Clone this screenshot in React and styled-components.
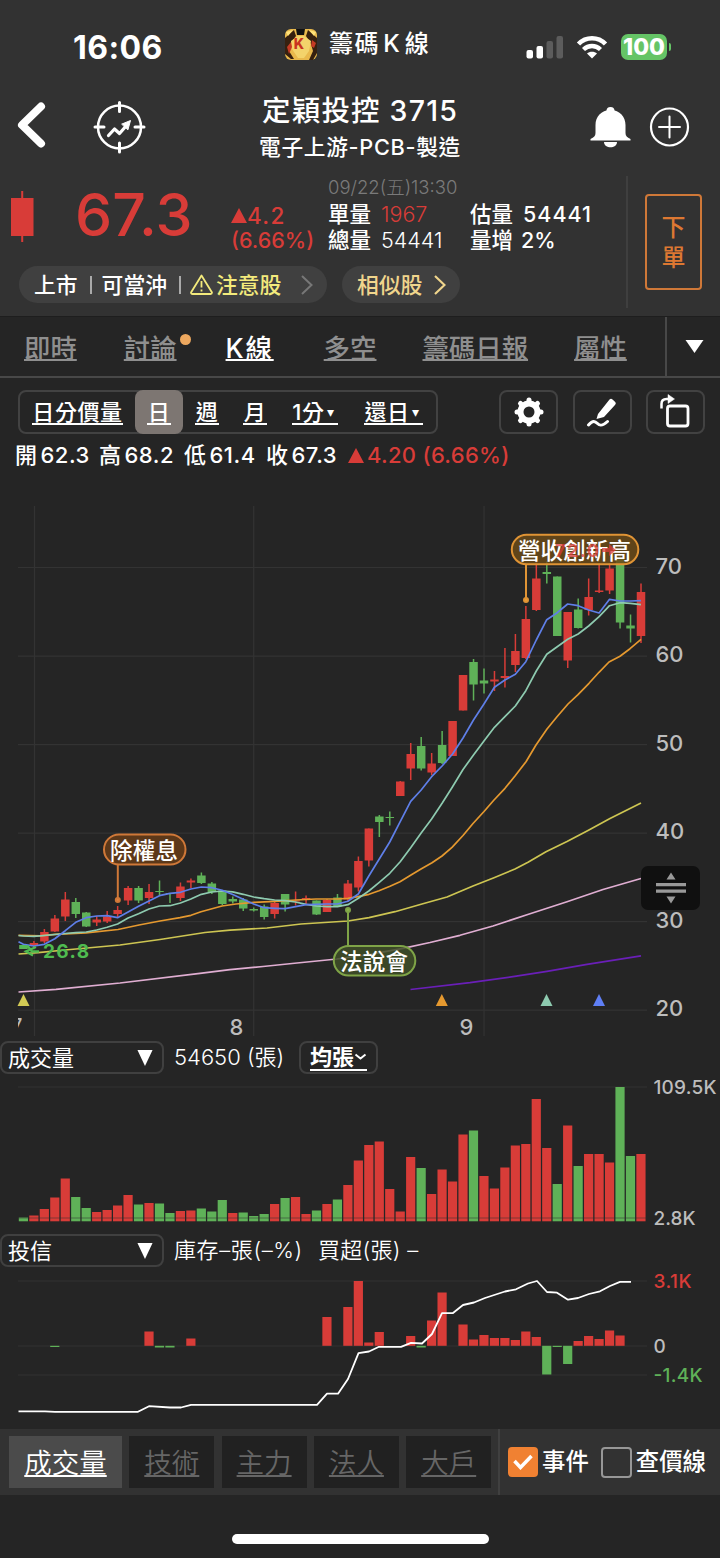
import React, { useState } from "react";
import styled, { createGlobalStyle } from "styled-components";

const RED = "#d83c38";
const GREEN = "#5fb158";

const GlobalStyle = createGlobalStyle`
  * {
    box-sizing: border-box;
  }
  body {
    margin: 0;
    background-color: #252525;
  }
  button {
    padding: 0;
    border: none;
    background: none;
    color: inherit;
    font: inherit;
    letter-spacing: inherit;
  }
`;

const Screen = styled.div`
  width: 720px;
  height: 1558px;
  display: flex;
  flex-direction: column;
  overflow: hidden;
  background-color: #252525;
  color: #fff;
  font-family: Inter, "Noto Sans CJK TC", sans-serif;
  font-weight: 500;
  white-space: nowrap;

  svg {
    display: block;
    flex: none;
  }
`;

/* header */

const Header = styled.header`
  height: 316px;
  flex: none;
  background-color: #323232;
`;

const StatusBar = styled.div`
  height: 90px;
  display: flex;
  align-items: flex-start;
`;

const Clock = styled.div`
  width: 212px;
  margin: 28px 0 0 73px;
  font-size: 32px;
  line-height: 40px;
  font-weight: 700;
  letter-spacing: 0.4px;
`;

const AppName = styled.div`
  width: 241px;
  margin-top: 27px;
  display: flex;
  align-items: center;
  font-size: 24px;
  line-height: 34px;
  letter-spacing: 1.4px;

  svg {
    margin-right: 12px;
  }
  span {
    width: 25px;
    text-align: center;
  }
`;

const StatusIcons = styled.div`
  margin-top: 34px;
  display: flex;
  align-items: center;
  gap: 13px;
`;

const Battery = styled.div`
  width: 46px;
  height: 26px;
  border-radius: 7px;
  background-color: #65c466;
  font-size: 23px;
  font-weight: 800;
  line-height: 26px;
  text-align: center;
`;

const BatteryWrap = styled.div`
  display: flex;
  align-items: center;
  gap: 2px;
`;

const BatteryTip = styled.div`
  width: 2px;
  height: 8px;
  border-radius: 0 2px 2px 0;
  background-color: #65c466;
`;

const NavBar = styled.div`
  height: 82px;
  display: flex;
  align-items: flex-start;
  padding-left: 17px;
`;

const NavIcon = styled.button`
  margin: ${(props) => props.$margin};
`;

const TitleBlock = styled.div`
  width: 260px;
  margin: 2px 0 0 84px;
  text-align: center;
`;

const Title = styled.h1`
  margin: 0;
  font-size: 28.5px;
  line-height: 38px;
  font-weight: 500;
  letter-spacing: 1.2px;
`;

const SubTitle = styled.div`
  font-size: 21.7px;
  line-height: 34px;
  letter-spacing: 0.7px;
`;

const Quote = styled.div`
  display: flex;
  height: 144px;
`;

const QuoteMain = styled.div`
  width: 628px;
  height: 132px;
  margin-top: 4px;
  border-right: 2px solid #3f3f3f;
`;

const PriceRow = styled.div`
  height: 84px;
  display: flex;
  align-items: flex-start;
`;

const Price = styled.div`
  width: 155px;
  margin: 7px 0 0 41px;
  color: ${RED};
  font-size: 59px;
  line-height: 64px;
  font-weight: 550;
  letter-spacing: 0.2px;
`;

const Change = styled.div`
  width: 97px;
  margin: 27px 0 0 1px;
  color: ${RED};
  font-size: 21.5px;
  line-height: 25px;
`;

const ChangeLine = styled.div`
  display: flex;
  align-items: center;
  font-size: 22.5px;
  letter-spacing: 1.3px;
`;

const Volumes = styled.div`
  display: grid;
  grid-template-columns: 142px auto;
  font-size: 21.5px;
  line-height: 26px;
`;

const QuoteTime = styled.div`
  grid-column: 1 / 3;
  height: 25px;
  line-height: 22px;
  font-size: 18.5px;
  font-weight: 300;
  color: #7a7a7a;
`;

const Figure = styled.div`
  display: flex;
  align-items: center;
  gap: ${(props) => props.$gap || 10}px;

  b {
    font-weight: ${(props) => (props.$light ? 300 : 500)};
    letter-spacing: ${(props) => props.$spacing || 0}px;
    color: ${(props) => props.$color || "#fff"};
  }
`;

const PillRow = styled.div`
  display: flex;
  gap: 15px;
  margin: 6px 0 0 19px;
`;

const Pill = styled.button`
  width: ${(props) => props.$width}px;
  height: 37px;
  padding-left: 15px;
  display: flex;
  align-items: center;
  border-radius: 19px;
  background-color: #404040;
  color: ${(props) => props.$color || "#fff"};
  font-size: 21.8px;
  line-height: 34px;

  i {
    width: 2px;
    height: 18px;
    background-color: #aaa;
  }
`;

const OrderButton = styled.button`
  width: 57px;
  height: 96px;
  margin: 22px 0 0 17px;
  padding-top: 2px;
  border: 2px solid #cf7838;
  border-radius: 4px;
  color: #dd7832;
  font-size: 24px;
  line-height: 30px;
  display: flex;
  flex-direction: column;
  align-items: center;
  justify-content: center;
`;

/* page tabs */

const Tabs = styled.nav`
  height: 62px;
  flex: none;
  display: flex;
  border-top: 1px solid #1e1e1e;
  border-bottom: 2px solid #484848;
`;

const TabList = styled.div`
  width: 667px;
  display: flex;
  align-items: center;
  border-right: 2px solid #484848;
`;

const Tab = styled.button`
  position: relative;
  margin-left: ${(props) => props.$gap}px;
  padding-top: 3px;
  color: ${(props) => (props.$active ? "#fff" : "#8f8f8f")};
  font-size: 26.4px;
  line-height: 36px;
  letter-spacing: ${(props) => (props.$active ? "1.8px" : 0)};
  text-decoration: underline;
  text-decoration-skip-ink: none;
  text-decoration-thickness: 2px;
  text-underline-offset: 1px;
`;

const Dot = styled.span`
  position: absolute;
  left: 56px;
  top: 7px;
  width: 11px;
  height: 11px;
  border-radius: 50%;
  background-color: #eda85f;
`;

const More = styled.button`
  flex: 1;
  display: flex;
  align-items: center;
  justify-content: center;
  padding-left: 1px;
`;

/* chart toolbar */

const Toolbar = styled.div`
  height: 56px;
  flex: none;
  display: flex;
  align-items: flex-end;
  padding-left: 18px;
`;

const Periods = styled.div`
  width: 420px;
  height: 44px;
  margin-right: 61px;
  display: flex;
  align-items: center;
  border: 2px solid #424242;
  border-radius: 8px;
`;

const Period = styled.button`
  width: ${(props) => props.$width}px;
  height: 44px;
  display: flex;
  align-items: center;
  justify-content: center;
  border-radius: 8px;
  background-color: ${(props) => (props.$active ? "#7d7672" : "transparent")};

  span {
    display: flex;
    align-items: center;
    justify-content: center;
    min-width: 24px;
    height: 25px;
    margin-top: 1px;
    border-bottom: 2px solid #fff;
    font-size: 22px;
    line-height: 24px;
    letter-spacing: 0.6px;
  }
  small {
    width: 13px;
    font-size: 14px;
    text-align: center;
  }
`;

const ToolButton = styled.button`
  width: 59px;
  height: 44px;
  margin-right: 14.5px;
  display: flex;
  align-items: center;
  justify-content: center;
  border: 2px solid #424242;
  border-radius: 8px;
`;

const Ohlc = styled.div`
  height: 44px;
  flex: none;
  padding: 0 0 2px 15px;
  display: flex;
  align-items: center;
  font-size: 22px;
  line-height: 30px;
  letter-spacing: 0.5px;
`;

const OhlcItem = styled.div`
  width: ${(props) => props.$width}px;
  display: flex;
  gap: 3px;
  align-items: center;
  color: ${(props) => props.$color || "#fff"};
  letter-spacing: ${(props) => (props.$color ? "0.3px" : "inherit")};
`;

/* charts */

const ChartArea = styled.div`
  position: relative;
  height: ${(props) => props.$height}px;
  flex: none;
`;

const SplitHandle = styled.button`
  position: absolute;
  left: 641px;
  top: 388px;
  width: 59px;
  height: 44px;
  border-radius: 7px;
  background-color: #101010;
  display: flex;
  align-items: center;
  justify-content: center;
`;

const PaneHead = styled.div`
  height: 34px;
  flex: none;
  display: flex;
  align-items: flex-start;
  font-size: 22px;
  line-height: 32px;
  font-weight: 400;
`;

const Select = styled.button`
  width: 164px;
  height: 33px;
  padding: 0 9px 0 6px;
  margin-right: 10px;
  display: flex;
  align-items: center;
  justify-content: space-between;
  border: 2px solid #404040;
  border-radius: 8px;
`;

const PaneText = styled.div`
  width: ${(props) => props.$width}px;
  letter-spacing: ${(props) => props.$spacing || 0}px;
  font-weight: 350;
`;

const AvgButton = styled.button`
  width: 79px;
  height: 33px;
  display: flex;
  align-items: center;
  justify-content: center;
  border: 2px solid #404040;
  border-radius: 8px;
  font-weight: 600;

  span {
    display: flex;
    align-items: center;
    height: 26px;
    border-bottom: 2px solid #fff;
  }
`;

const AxisText = styled.text`
  font-size: ${(props) => props.$size || 22}px;
  font-weight: ${(props) => props.$weight || 550};
  fill: ${(props) => props.$color || "#bdbdbd"};
`;

const EventText = styled.text`
  font-size: 22.5px;
  font-weight: 500;
  fill: #fff;
`;

/* bottom */

const BottomBar = styled.div`
  height: 66px;
  flex: none;
  display: flex;
  align-items: center;
  padding-left: 9px;
  background-color: #323232;
`;

const PaneTabs = styled.div`
  width: 491px;
  height: 66px;
  display: flex;
  align-items: center;
  gap: 7.3px;
  border-right: 2px solid #404040;
`;

const PaneTab = styled.button`
  width: ${(props) => (props.$active ? 113 : 85)}px;
  height: 52px;
  padding-top: 2px;
  background-color: ${(props) => (props.$active ? "#4b4b4b" : "#212121")};
  color: ${(props) => (props.$active ? "#fff" : "#666")};
  font-size: 27.5px;
  line-height: 40px;
  font-weight: 350;
  text-decoration: underline;
  text-decoration-skip-ink: none;
  text-decoration-thickness: 2px;
  text-underline-offset: 2px;
`;

const Check = styled.button`
  display: flex;
  align-items: center;
  gap: 4px;
  margin-left: ${(props) => props.$gap}px;
  font-size: 23.4px;
  line-height: 34px;
`;

const Box = styled.span`
  width: ${(props) => (props.$on ? 30 : 31)}px;
  height: ${(props) => (props.$on ? 30 : 31)}px;
  border-radius: 4px;
  border: ${(props) => (props.$on ? "none" : "2px solid #979797")};
  background-color: ${(props) => (props.$on ? "#f08132" : "transparent")};
  display: flex;
  align-items: center;
  justify-content: center;
`;

const HomeArea = styled.div`
  flex: 1;
  display: flex;
  justify-content: center;
  padding-top: 39px;
`;

const HomeBar = styled.div`
  width: 257px;
  height: 10px;
  border-radius: 5px;
  background-color: #fff;
`;

// [color, high, body top, body bottom, low]
const candles = [
  ["g", 945, 945, 949, 949],
  ["r", 941, 943, 946, 947],
  ["r", 929, 932, 941.5, 943],
  ["r", 915, 918.5, 931.5, 932],
  ["r", 892, 899.5, 916.5, 921],
  ["g", 898, 902, 914, 918],
  ["g", 912, 912.5, 926.5, 927],
  ["r", 916, 919.5, 922.5, 926],
  ["r", 911, 916.5, 921.5, 923],
  ["r", 906, 910, 914, 917],
  ["r", 886, 888, 900.5, 905],
  ["g", 886, 888, 900.5, 903],
  ["r", 884, 892, 898, 904],
  ["g", 880.5, 891, 892, 895.5],
  ["g", 893, 893, 894, 903],
  ["r", 882.5, 886.5, 898, 901],
  ["r", 878.5, 880.5, 882.5, 888],
  ["g", 872.5, 875.5, 883, 884],
  ["g", 882, 883.5, 892, 894],
  ["g", 890, 890.5, 904, 905],
  ["g", 896.5, 899, 901.5, 903.5],
  ["g", 898, 899.5, 908.5, 911],
  ["g", 907.5, 909, 910.5, 911.5],
  ["g", 904.5, 906.5, 917, 919.5],
  ["r", 901, 903, 914, 918.5],
  ["g", 894, 894, 904.5, 911.5],
  ["r", 891.5, 900.5, 901.5, 905.5],
  ["r", 895.5, 898, 900, 904],
  ["g", 900.5, 900.5, 914.5, 915],
  ["r", 899, 900, 912, 912],
  ["g", 894, 897.5, 906.5, 907],
  ["r", 880, 883.5, 899.5, 901.5],
  ["r", 856.5, 861, 887.5, 891.5],
  ["r", 828.5, 828.5, 860.5, 866.5],
  ["g", 815, 816.5, 822, 837],
  ["g", 811.5, 817, 818, 825.5],
  ["r", 781, 781.5, 796, 796],
  ["r", 743, 754, 768.5, 780],
  ["g", 737, 746, 768.5, 770.5],
  ["r", 753, 763.5, 772.5, 775],
  ["g", 731, 745, 763, 764],
  ["r", 721, 721, 756, 756],
  ["r", 675, 675, 710.5, 710.5],
  ["g", 659, 662, 684.5, 700.5],
  ["g", 668.5, 680.5, 683.5, 693.5],
  ["r", 671, 679.5, 681.5, 691],
  ["r", 648, 676, 678, 687.5],
  ["r", 634, 651, 665, 672],
  ["r", 606, 619, 658, 659],
  ["r", 560, 578.5, 610, 611],
  ["g", 561, 572, 574, 583.5],
  ["g", 576.5, 576.5, 636, 636],
  ["r", 612, 612, 660.5, 668],
  ["g", 598.5, 609.5, 628, 628.5],
  ["r", 578.5, 597, 610, 615.5],
  ["r", 563, 590.5, 592, 593],
  ["r", 563, 568.5, 590.5, 594],
  ["g", 555, 557, 622.5, 628.5],
  ["g", 614.5, 625.5, 628.5, 642.5],
  ["r", 583.5, 592, 636, 643],
];

const volumeColors =
  "grrrrggrrrrgrggrrgggrgggrgrrgrgrrrrrrrgrrrrgrrrrrrrgrgrrrggr";

const volumeTops = [
  1217.5, 1215.5, 1209, 1197.5, 1178.5, 1197, 1208, 1212, 1210, 1205.5, 1195,
  1204.5, 1203, 1203.5, 1213, 1211, 1210.5, 1208.5, 1211.5, 1200, 1213, 1212.5,
  1216, 1214, 1204, 1198, 1197, 1214, 1210.5, 1204, 1199.5, 1185, 1160.5, 1145,
  1141.5, 1189, 1211.5, 1157, 1168, 1194, 1169.5, 1181.5, 1134.5, 1130.5, 1176,
  1188.5, 1167.5, 1145.5, 1144, 1099, 1148, 1184, 1125.5, 1166, 1154, 1154,
  1162.5, 1087, 1156, 1154,
];

// candle index -> bar end, above or below the zero line at 1346
const trustBars = [
  [3, 1347], [12, 1331.5], [13, 1347.5], [14, 1347.5], [16, 1338.5],
  [29, 1317], [31, 1307], [32, 1281], [33, 1342.5], [34, 1332], [37, 1336],
  [38, 1347.5], [39, 1320.5], [40, 1292.5], [42, 1324.5], [43, 1339.5],
  [44, 1335], [45, 1338], [46, 1338], [47, 1340], [48, 1331.5], [49, 1337],
  [50, 1374.5], [51, 1347], [52, 1364], [53, 1341], [54, 1336], [55, 1339],
  [56, 1330.5], [57, 1335.5],
];

const trustLine =
  "18.5,1411.3 45,1411.3 55,1411.8 138,1411.8 149,1406.2 170,1407.5 181,1407.5 191,1404.8 317,1404.8 327,1393.7 338,1393.7 348,1379 358.5,1353.2 369,1351.5 379,1346.8 401,1346.8 411,1342.8 422,1343.5 432,1334 442,1313.2 453,1313 463,1305 474,1302.5 485,1298 505,1291.5 516,1289.3 528,1283.5 537,1281 547,1292 557,1292.7 568,1299.7 578,1298 589,1294 600,1291.3 610,1286 620,1281.8 631,1281.8";

// moving averages: first x is given, the rest follow the candles
const ma5 = [
  944.3, 946, 944.3, 938.7, 930.7, 922.3, 917.7, 916, 915.7, 917.7, 912, 906.3,
  901, 895.7, 893.3, 892.3, 889, 887, 887.7, 890.3, 894.5, 899.3, 904, 907.7,
  908.3, 908.7, 906.7, 904.7, 904.3, 904, 904, 901.3, 894, 876, 859, 842, 821.7,
  801.3, 790, 776.7, 766, 754, 738, 720, 704, 687.3, 680, 674.3, 661.7, 640,
  619.7, 612.7, 604, 605.7, 610, 613, 599.3, 601, 601, 600.7,
];

const ma10 = [
  936, 936.3, 935.5, 934.5, 933.5, 932.7, 932, 930, 927.3, 924, 918, 913.7, 909,
  906, 905.7, 903, 899, 894.3, 892, 891, 891.9, 894.3, 897, 898.7, 900, 900.7,
  902, 904.3, 906, 906.7, 906.7, 904.7, 898.3, 891, 882.3, 873.3, 861.7, 847.7,
  833, 819, 803.3, 786.7, 769.5, 755, 741, 727.3, 716.7, 706, 690.7, 671, 654.3,
  646.7, 639.3, 634, 626, 616.7, 605.7, 602.7, 603.3, 604.7,
];

const x = (i) => 23.4 + i * 10.467;
const follow = (start, ys) =>
  `18.5,${start} ` + ys.map((y, i) => `${x(i)},${y}`).join(" ");

const lines = [
  { color: "#6a1fb8", points: "410.5,989.5 470,982.7 513,976.7 547,971.3 587,964.3 641,955.8" },
  {
    color: "#e0aed2",
    points:
      "18.5,992 56,989.3 120,983 200,973.3 230,969.7 263,966.5 297,963 337,959 370,954.3 403,948.3 430,942.5 460,935.3 493,926 527,914.7 567,901.7 603,889.5 641,878.5",
  },
  {
    color: "#cdc552",
    points:
      "18.5,954 38,952.7 65,950 120,945 160,939.5 205,932.5 230,930.2 267,928 301,924 348,921 369,917.7 395,911.7 422,904 447,897 473,886 494,877.7 515,869 528,862.3 546,851.7 567,841.5 588,830.5 610,818.5 641,803",
  },
  {
    color: "#e5992f",
    points:
      "18.5,935.3 40,935.8 55,934.3 86,932.8 118,929.5 139,925 160,921 180,917.7 191,915.3 201,911.7 212,908.8 222,906 236,904 254,902.3 275,901.3 296,900 316,899 337,899 348,898.3 358,896.7 369,894.3 379,890.7 390,886.3 400,881.7 411,875 421,869 432,862.7 442,856 452,847.3 463,835.5 473,823.5 484,811.5 494,800 505,788.3 515,776 526,761.7 536,745 547,729 557,716.7 568,704 578,694.7 589,683.3 599,672.3 609,662 620,656.3 630,648.7 641,639.3",
  },
  { color: "#8ecbb0", points: follow(935.5, ma10) },
  { color: "#5f7fe8", points: follow(941.7, ma5) },
];

const fill = (c) => (c === "r" ? RED : GREEN);

function DownTriangle({ w = 18, h = 12 }) {
  return (
    <svg width={w} height={h} viewBox="0 0 18 12" preserveAspectRatio="none">
      <path d="M0.5 0h17L9 12z" fill="#fff" />
    </svg>
  );
}

function UpTriangle() {
  return (
    <svg width="16" height="15" viewBox="0 0 16 15">
      <path d="M8 0l8 15H0z" fill={RED} />
    </svg>
  );
}

function AppLogo() {
  return (
    <svg width="32" height="31" viewBox="0 0 32 31">
      <rect width="32" height="31" rx="6" fill="#e9b94c" />
      <path d="M0 9l9-8 2 6-6 8-1 7 5 8H6L0 25z" fill="#36200f" />
      <path d="M32 9l-9-8-2 6 5 8 2 7-4 9h4l4-7z" fill="#36200f" />
      <path d="M6 12l7-5h6l7 5-2 10-5 7h-6l-6-9z" fill="#f3d36b" />
      <path d="M11 0h9l-1 6h-7z" fill="#111" />
      <path d="M2 18l4-5 1 5-3 7zM27 11l4 3-2 5-3-2z" fill="#c43a24" />
      <path d="M1 3l7-2-5 6zM24 1l7 2-2 4z" fill="#ffe27a" />
      <text
        x="14"
        y="19.5"
        textAnchor="middle"
        fontSize="14"
        fontWeight="800"
        letterSpacing="0"
        fill="#c9341f"
      >
        K
      </text>
    </svg>
  );
}

function Signal() {
  return (
    <svg width="37" height="24" viewBox="0 0 37 24">
      <rect x="0.5" y="15" width="6.5" height="8.5" rx="2" fill="#fff" />
      <rect x="10.5" y="11" width="6.5" height="12.5" rx="2" fill="#fff" />
      <rect x="20.5" y="6" width="6.5" height="17.5" rx="2" fill="#5c5c5c" />
      <rect x="30.5" y="1" width="6.5" height="22.5" rx="2" fill="#5c5c5c" />
    </svg>
  );
}

function Wifi() {
  return (
    <svg width="32" height="24" viewBox="0 0 32 24" fill="none" stroke="#fff">
      <path d="M2.5 9C10 1.3 22 1.3 29.5 9" strokeWidth="4.6" />
      <path d="M7.5 14.5C12.5 9.8 19.5 9.8 24.5 14.5" strokeWidth="4.4" />
      <path d="M16 23.5l-5-5c2.5-2.5 7.5-2.5 10 0z" fill="#fff" stroke="none" />
    </svg>
  );
}

function PriceChart() {
  return (
    <svg width="720" height="563" viewBox="0 478 720 563">
      <g stroke="#333" strokeWidth="1.2">
        {[567.5, 656.2, 744.7, 833.2, 921.7, 1010.2].map((y) => (
          <line key={y} x1="18" x2="647" y1={y} y2={y} />
        ))}
        {[34.5, 253.7, 484].map((gx) => (
          <line key={gx} x1={gx} x2={gx} y1="506" y2="1036" />
        ))}
      </g>
      {candles.map(([c, high, top, bottom, low], i) => (
        <g key={i} fill={fill(c)}>
          <rect x={x(i) - 0.7} y={high} width="1.5" height={low - high} />
          <rect x={x(i) - 4.2} y={top} width="8.5" height={bottom - top} />
        </g>
      ))}
      {lines.map((line) => (
        <polyline
          key={line.color}
          points={line.points}
          fill="none"
          stroke={line.color}
          strokeWidth="1.7"
          strokeLinejoin="round"
        />
      ))}

      {/* low of the visible range */}
      <path
        d="M20 946.5h8l4 5h7M36 947l-10 4.500 7 4"
        fill="none"
        stroke="#4fbb50"
        strokeWidth="2.4"
      />
      <AxisText x="43" y="958" $size={19} $weight={650} $color="#4fbb50" textLength="46">
        26.8
      </AxisText>

      {/* events */}
      <g stroke="#cf7838" strokeWidth="2">
        <line x1="117.8" x2="117.8" y1="864" y2="900" />
        <circle cx="117.8" cy="900" r="2" fill="#e08040" />
        <rect x="104" y="834.5" width="81.5" height="30" rx="15" fill="#613918" fillOpacity="0.92" />
      </g>
      <EventText x="110" y="858.5" textLength="68">除權息</EventText>
      <g stroke="#7fa447" strokeWidth="2">
        <line x1="348" x2="348" y1="946" y2="910" />
        <circle cx="348" cy="910" r="2" fill="#8ab54a" />
        <rect x="333.8" y="946" width="81.5" height="29.5" rx="14.7" fill="#3f4f28" fillOpacity="0.85" />
      </g>
      <EventText x="340" y="970" textLength="68">法說會</EventText>
      <g stroke="#e09435" strokeWidth="2">
        <line x1="526" x2="526" y1="564" y2="600" />
        <circle cx="526" cy="600" r="2" fill="#f0a030" />
        <rect x="511.8" y="534.8" width="126.5" height="29.5" rx="14.7" fill="#6b4a18" fillOpacity="0.85" />
      </g>
      <EventText x="518" y="558.5" textLength="113">營收創新高</EventText>

      {/* high of the visible range */}
      <g fill={RED} opacity="0.75">
        <AxisText x="555" y="557" $size={18} $weight={650} $color={RED} textLength="44">
          72.0
        </AxisText>
        <path d="M602 548h7v-4l7 6-7 6v-4h-7z" />
      </g>

      {[
        [23.5, "#d3cb55"],
        [441.8, "#e5992f"],
        [546.5, "#8ecbb0"],
        [599, "#5f7ff5"],
      ].map(([tx, color]) => (
        <path key={tx} d={`M${tx} 994l6 12h-12z`} fill={color} />
      ))}

      <AxisText x="655.5" y="573.5">70</AxisText>
      <AxisText x="655.5" y="662">60</AxisText>
      <AxisText x="655.5" y="750.5">50</AxisText>
      <AxisText x="655.5" y="839">40</AxisText>
      <AxisText x="655.5" y="927.5">30</AxisText>
      <AxisText x="655.5" y="1016">20</AxisText>
      {/* scrolled half out of the plot */}
      <svg x="18" y="1010" width="30" height="30">
        <AxisText x="-6" y="22" $size={18}>7</AxisText>
      </svg>
      <AxisText x="229.5" y="1035">8</AxisText>
      <AxisText x="459.5" y="1035">9</AxisText>
    </svg>
  );
}

function VolumeChart() {
  return (
    <svg width="720" height="159" viewBox="0 1075 720 159">
      <line x1="18" x2="647" y1="1087" y2="1087" stroke="#333" strokeWidth="1.2" />
      {volumeTops.map((top, i) => (
        <rect
          key={i}
          x={x(i) - 4.6}
          y={top}
          width="9.2"
          height={1221.3 - top}
          fill={fill(volumeColors[i])}
        />
      ))}
      <line x1="18" x2="647" y1="1218" y2="1218" stroke="#2b2b2b" strokeOpacity="0.5" />
      <AxisText x="653.5" y="1094" $size={19} textLength="63">109.5K</AxisText>
      <AxisText x="653.5" y="1224.5" $size={19} textLength="42">2.8K</AxisText>
    </svg>
  );
}

function TrustChart() {
  return (
    <svg width="720" height="161" viewBox="0 1268 720 161">
      {[1281, 1346, 1375].map((y) => (
        <line key={y} x1="18" x2="647" y1={y} y2={y} stroke="#333" strokeWidth="1.2" />
      ))}
      {trustBars.map(([i, end]) => (
        <rect
          key={i}
          x={x(i) - 4.6}
          y={Math.min(end, 1345.8)}
          width="9.2"
          height={Math.abs(end - 1345.8)}
          fill={end < 1346 ? RED : GREEN}
        />
      ))}
      <polyline
        points={trustLine}
        fill="none"
        stroke="#fff"
        strokeWidth="1.8"
        strokeLinejoin="round"
      />
      <AxisText x="653.5" y="1287.5" $size={19} $color={RED} textLength="38">3.1K</AxisText>
      <AxisText x="653.5" y="1353" $size={19}>0</AxisText>
      <AxisText x="653.5" y="1382" $size={19} $color={GREEN} textLength="49">-1.4K</AxisText>
    </svg>
  );
}

function App() {
  const [period, setPeriod] = useState("日");
  const [pane, setPane] = useState("成交量");
  const [showEvents, setShowEvents] = useState(true);
  const [showPriceLine, setShowPriceLine] = useState(false);

  const renderPeriod = (label, width, arrow) => (
    <Period $width={width} $active={period === label} onClick={() => setPeriod(label)}>
      <span>
        {label}
        {arrow && <small>▾</small>}
      </span>
    </Period>
  );

  return (
    <>
      <GlobalStyle />
      <Screen>
        <Header>
          <StatusBar>
            <Clock>16:06</Clock>
            <AppName>
              <AppLogo />
              籌碼<span>K</span>線
            </AppName>
            <StatusIcons>
              <Signal />
              <Wifi />
              <BatteryWrap>
                <Battery>100</Battery>
                <BatteryTip />
              </BatteryWrap>
            </StatusIcons>
          </StatusBar>

          <NavBar>
            <NavIcon $margin="12px 0 0 0">
              <svg width="30" height="46" viewBox="0 0 30 46">
                <path
                  d="M24 4.500L5 23l19 18.500"
                  fill="none"
                  stroke="#fff"
                  strokeWidth="8"
                  strokeLinecap="round"
                  strokeLinejoin="round"
                />
              </svg>
            </NavIcon>
            <NavIcon $margin="11px 0 0 46px">
              <svg
                width="53"
                height="53"
                viewBox="0 0 53 53"
                fill="none"
                stroke="#fff"
                strokeWidth="2.5"
                strokeLinecap="round"
              >
                <circle cx="26.5" cy="26" r="21.5" />
                <path d="M26.5 1.5v9M26.5 42v9M2 26h9M42 26h9" strokeWidth="3" />
                <path d="M15.5 34.5l6-6.5 5 4.5 7-8" strokeWidth="3.2" strokeLinejoin="round" />
                <path d="M29 23l8.5-3.5L35 28.5z" fill="#fff" strokeWidth="1" />
              </svg>
            </NavIcon>
            <TitleBlock>
              <Title>定穎投控 3715</Title>
              <SubTitle>電子上游-PCB-製造</SubTitle>
            </TitleBlock>
            <NavIcon $margin="16px 0 0 100px">
              <svg width="41" height="43" viewBox="0 0 41 43">
                <circle cx="20.5" cy="5" r="4" fill="#fff" />
                <path
                  d="M20.5 4C11 4 5.500 11 5.500 19v8c0 3-1.500 4-5 6v1.500h40V33c-3.500-2-5-3-5-6v-8c0-8-5.500-15-15-15z"
                  fill="#fff"
                />
                <path d="M14 36h13c0 7-13 7-13 0z" fill="#fff" />
              </svg>
            </NavIcon>
            <NavIcon $margin="17px 0 0 18px">
              <svg width="41" height="41" viewBox="0 0 41 41" fill="none" stroke="#fff">
                <circle cx="20.5" cy="20" r="18.5" strokeWidth="2.2" />
                <path d="M20.5 9.5v21M10 20h21" strokeWidth="2" strokeLinecap="round" />
              </svg>
            </NavIcon>
          </NavBar>

          <Quote>
            <QuoteMain>
              <PriceRow>
                <svg width="34" height="68" viewBox="0 0 34 68" fill={RED}>
                  <rect x="21.2" y="15" width="2" height="51" />
                  <rect x="11" y="22" width="22.5" height="38" />
                </svg>
                <Price>67.3</Price>
                <Change>
                  <ChangeLine>
                    <UpTriangle />
                    4.2
                  </ChangeLine>
                  (6.66%)
                </Change>
                <Volumes>
                  <QuoteTime>09/22(五)13:30</QuoteTime>
                  <Figure $light $color={RED}>
                    單量 <b>1967</b>
                  </Figure>
                  <Figure $spacing={1}>
                    估量 <b>54441</b>
                  </Figure>
                  <Figure $light>
                    總量 <b>54441</b>
                  </Figure>
                  <Figure $gap={8}>
                    量增 <b>2%</b>
                  </Figure>
                </Volumes>
              </PriceRow>
              <PillRow>
                <Pill $width={308}>
                  上市
                  <i style={{ margin: "0 10px 0 12px" }} />
                  可當沖
                  <i style={{ margin: "0 9px 0 12px" }} />
                  <svg
                    width="23"
                    height="21"
                    viewBox="0 0 23 21"
                    fill="none"
                    stroke="#f3ea7c"
                    strokeWidth="1.8"
                    strokeLinejoin="round"
                  >
                    <path d="M11.5 1.5L22 18.5q0 1.5-1.5 1.5H2.5Q1 20 1 18.5z" />
                    <path d="M11.5 7v6.5M11.5 15.5v2" />
                  </svg>
                  <span style={{ color: "#f3ea7c", margin: "0 20px 0 3px" }}>注意股</span>
                  <svg width="12" height="20" viewBox="0 0 12 20" fill="none" stroke="#777" strokeWidth="2">
                    <path d="M1 1l9.500 9L1 19" />
                  </svg>
                </Pill>
                <Pill $width={118} $color="#f0d58c">
                  <span style={{ marginRight: 12 }}>相似股</span>
                  <svg width="12" height="20" viewBox="0 0 12 20" fill="none" stroke="#f0d58c" strokeWidth="2.2">
                    <path d="M1 1l9.500 9L1 19" />
                  </svg>
                </Pill>
              </PillRow>
            </QuoteMain>
            <OrderButton>
              <span>下</span>
              <span>單</span>
            </OrderButton>
          </Quote>
        </Header>

        <Tabs>
          <TabList>
            <Tab $gap={24}>即時</Tab>
            <Tab $gap={47}>
              討論
              <Dot />
            </Tab>
            <Tab $gap={49} $active>
              K線
            </Tab>
            <Tab $gap={50}>多空</Tab>
            <Tab $gap={46}>籌碼日報</Tab>
            <Tab $gap={46}>屬性</Tab>
          </TabList>
          <More>
            <DownTriangle w={19} h={13} />
          </More>
        </Tabs>

        <Toolbar>
          <Periods>
            {renderPeriod("日分價量", 115)}
            {renderPeriod("日", 48)}
            {renderPeriod("週", 48)}
            {renderPeriod("月", 48)}
            {renderPeriod("1分", 72, true)}
            {renderPeriod("還日", 85, true)}
          </Periods>
          <ToolButton>
            <svg width="30" height="30" viewBox="0 0 30 30" fill="none" stroke="#fff">
              <circle cx="15" cy="15" r="8.5" strokeWidth="6" />
              {[0, 45, 90, 135, 180, 225, 270, 315].map((a) => (
                <path
                  key={a}
                  d="M15 5V3"
                  strokeWidth="5"
                  strokeLinecap="round"
                  transform={`rotate(${a} 15 15)`}
                />
              ))}
            </svg>
          </ToolButton>
          <ToolButton>
            <svg width="32" height="32" viewBox="0 0 32 32">
              <path d="M12 18l11.5-14.500q1.500-1.500 3 0l2.700 2.500q1.300 1.300 0 2.800L18 21l-7.500 2z" fill="#fff" />
              <path
                d="M2.5 29c4.500-5 6.500-4 9-1.500s5 2.500 10-2"
                fill="none"
                stroke="#fff"
                strokeWidth="3"
                strokeLinecap="round"
              />
            </svg>
          </ToolButton>
          <ToolButton>
            <svg width="32" height="36" viewBox="0 0 32 36" fill="none" stroke="#fff">
              <rect x="7.5" y="12" width="20.5" height="20" rx="2.5" strokeWidth="2.8" />
              <path d="M1.500 14.500V10q0-5 5-5h3" strokeWidth="2.500" />
              <path d="M8 0.500l6.500 4.500L8 9.500z" fill="#fff" strokeWidth="0.5" />
            </svg>
          </ToolButton>
        </Toolbar>

        <Ohlc>
          <OhlcItem $width={84}>
            <span>開</span>62.3
          </OhlcItem>
          <OhlcItem $width={85}>
            <span>高</span>68.2
          </OhlcItem>
          <OhlcItem $width={82}>
            <span>低</span>61.4
          </OhlcItem>
          <OhlcItem $width={82}>
            <span>收</span>67.3
          </OhlcItem>
          <OhlcItem $width={170} $color={RED}>
            <UpTriangle />
            4.20 (6.66%)
          </OhlcItem>
        </Ohlc>

        <ChartArea $height={563}>
          <PriceChart />
          <SplitHandle>
            <svg width="30" height="32" viewBox="0 0 30 32" fill="#999">
              <path d="M15 0.500l4.500 7h-9zM15 31.500l4.500-7h-9zM0 11h30v3.300H0zM0 17.500h30v3.300H0z" />
            </svg>
          </SplitHandle>
        </ChartArea>

        <PaneHead>
          <Select>
            成交量
            <DownTriangle w={16} h={16} />
          </Select>
          <PaneText $width={125}>54650 (張)</PaneText>
          <AvgButton>
            <span>
              均張
              <svg width="13" height="8" viewBox="0 0 13 8" fill="none" stroke="#fff" strokeWidth="2">
                <path d="M1.500 1.500l5 4 5-4" />
              </svg>
            </span>
          </AvgButton>
        </PaneHead>
        <ChartArea $height={159}>
          <VolumeChart />
        </ChartArea>

        <PaneHead>
          <Select>
            投信
            <DownTriangle w={16} h={16} />
          </Select>
          <PaneText $width={144} $spacing={0.6}>庫存–張(–%)</PaneText>
          <PaneText $width={110} $spacing={0.3}>買超(張) –</PaneText>
        </PaneHead>
        <ChartArea $height={161}>
          <TrustChart />
        </ChartArea>

        <BottomBar>
          <PaneTabs>
            {["成交量", "技術", "主力", "法人", "大戶"].map((name) => (
              <PaneTab key={name} $active={pane === name} onClick={() => setPane(name)}>
                {name}
              </PaneTab>
            ))}
          </PaneTabs>
          <Check $gap={8} onClick={() => setShowEvents(!showEvents)}>
            <Box $on={showEvents}>
              {showEvents && (
                <svg width="20" height="16" viewBox="0 0 20 16" fill="none" stroke="#fff" strokeWidth="3.5">
                  <path d="M1.500 7l6 6.500L18.500 2" />
                </svg>
              )}
            </Box>
            事件
          </Check>
          <Check $gap={12} onClick={() => setShowPriceLine(!showPriceLine)}>
            <Box $on={showPriceLine} />
            查價線
          </Check>
        </BottomBar>

        <HomeArea>
          <HomeBar />
        </HomeArea>
      </Screen>
    </>
  );
}

export default App;
